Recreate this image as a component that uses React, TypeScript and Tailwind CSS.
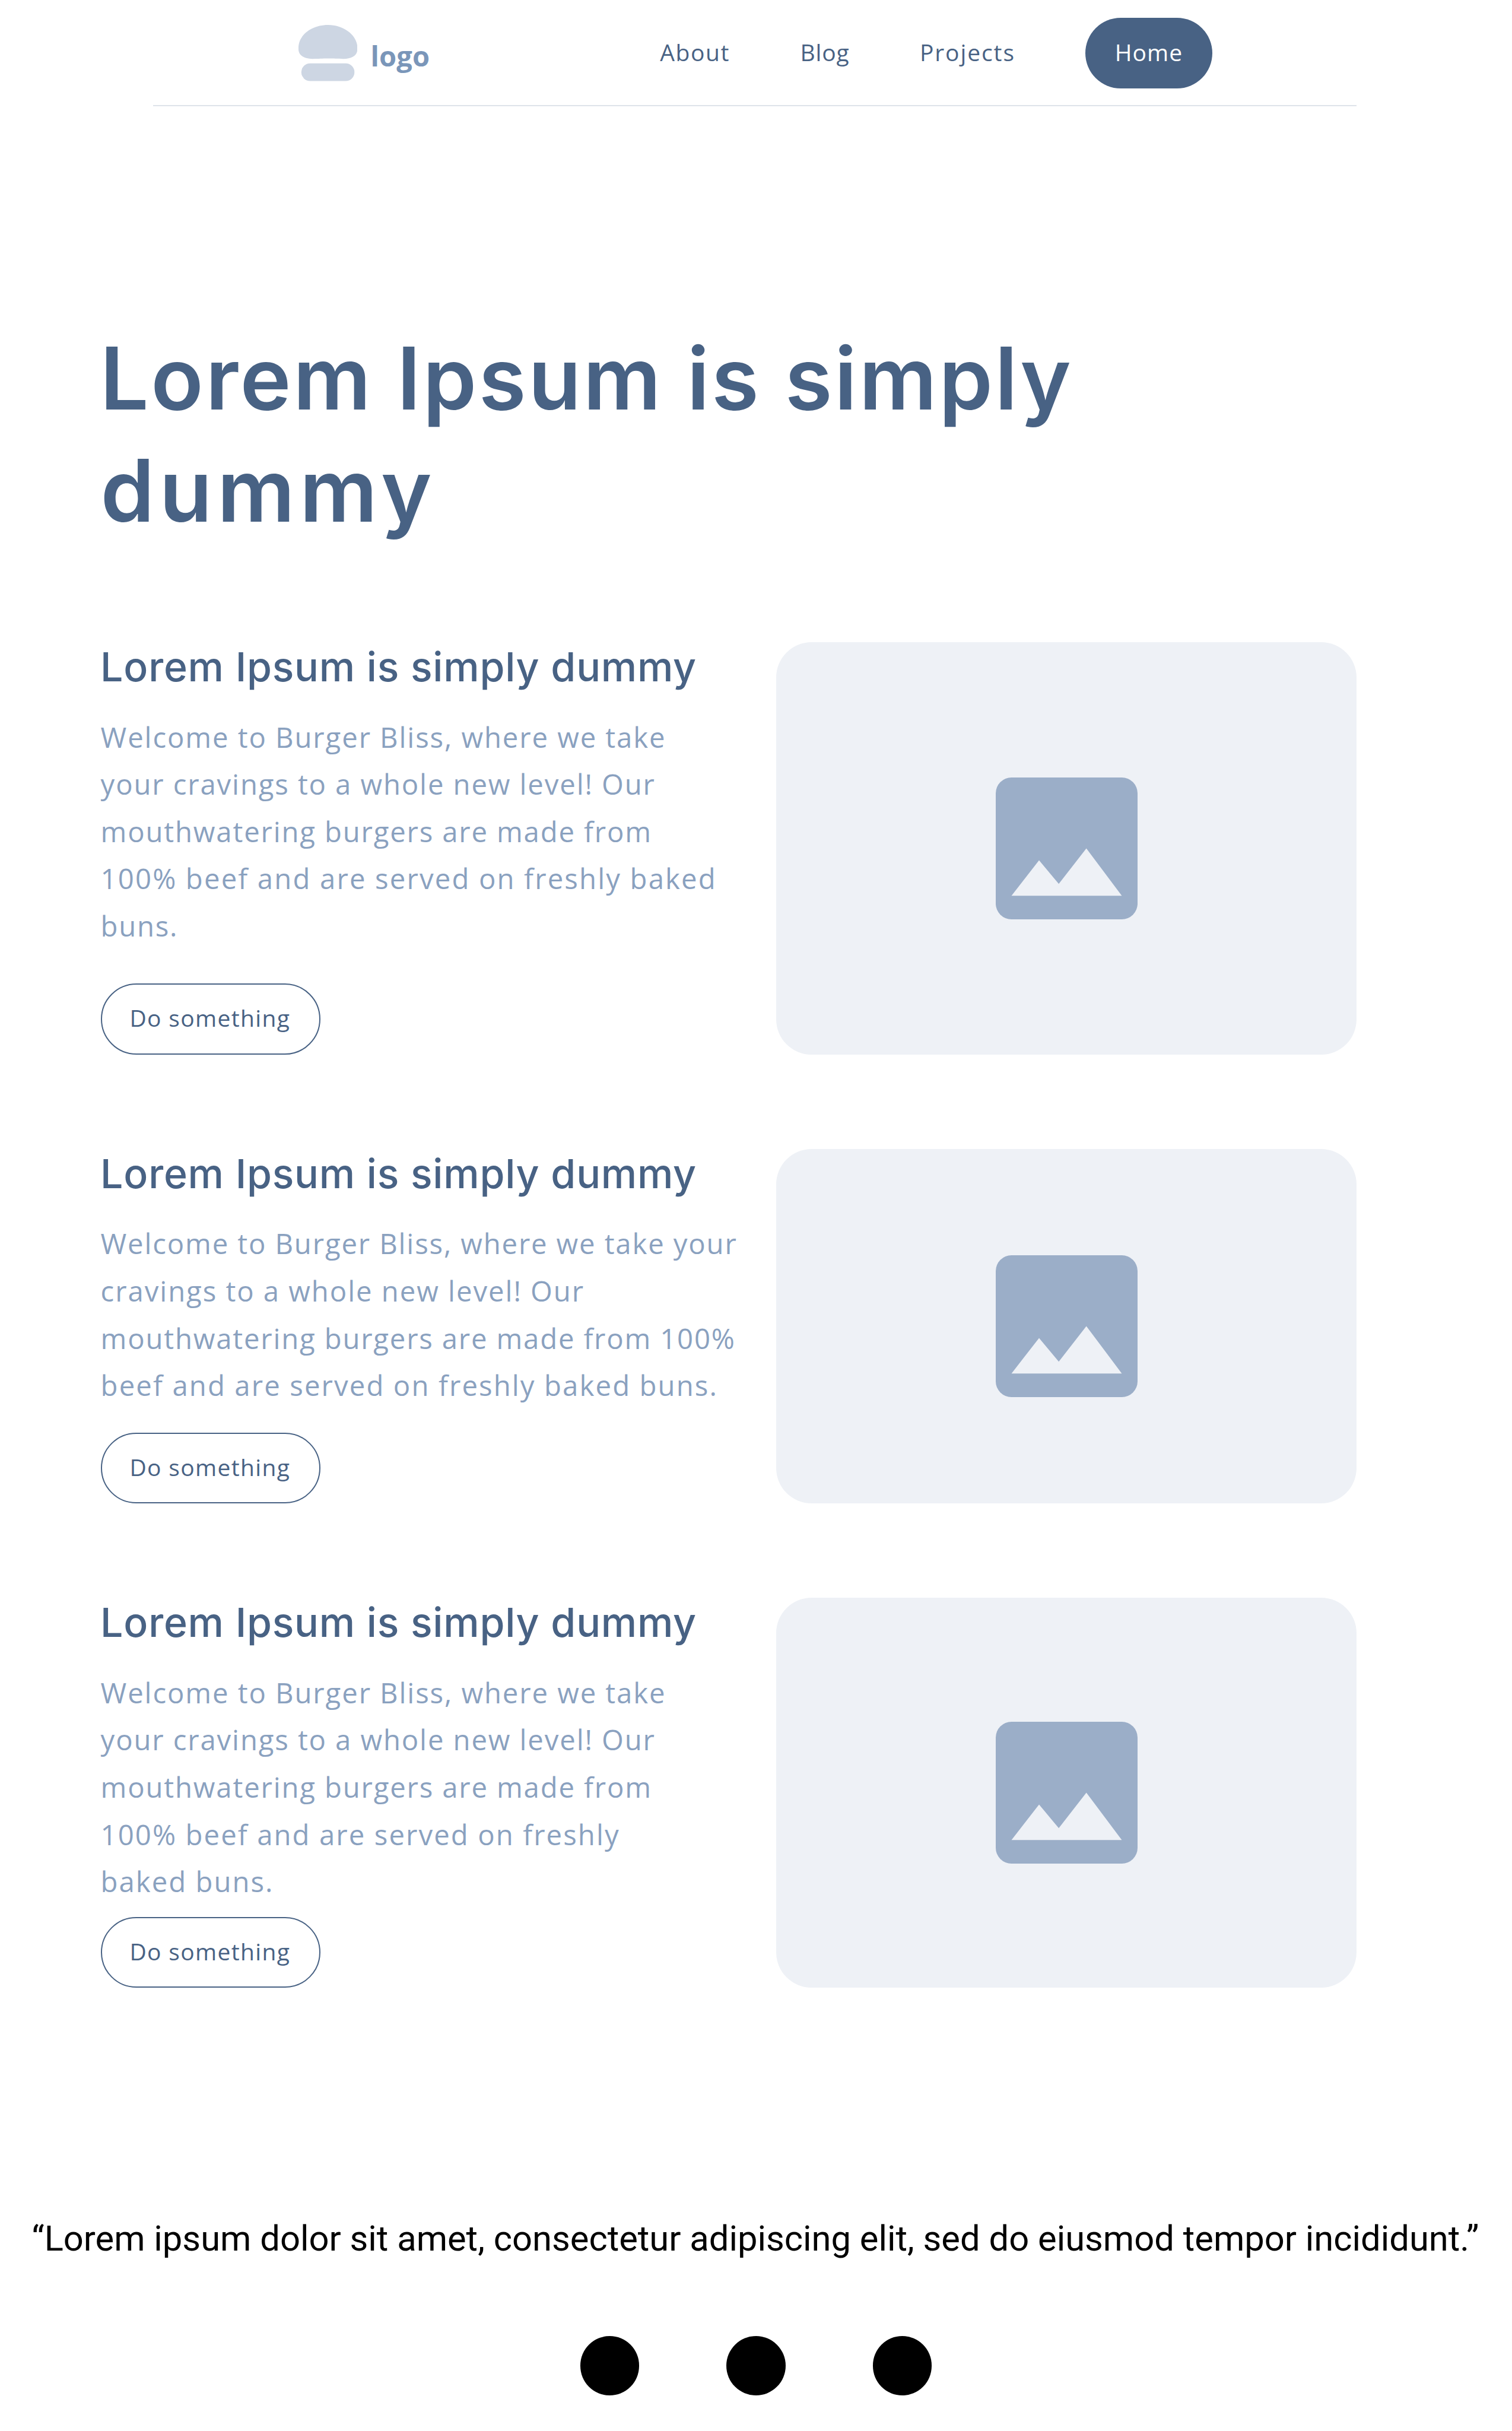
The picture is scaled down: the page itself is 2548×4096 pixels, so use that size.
type Line = { text: string; tracking: string };

const W = "Welcome to Burger Bliss, where we take";

const sections: { height: string; lines: Line[] }[] = [
  {
    height: "h-[694.7px]",
    lines: [
      { text: W, tracking: "tracking-[1.9px]" },
      { text: "your cravings to a whole new level! Our", tracking: "tracking-[1.87px]" },
      { text: "mouthwatering burgers are made from", tracking: "tracking-[1.83px]" },
      { text: "100% beef and are served on freshly baked", tracking: "tracking-[2.15px]" },
      { text: "buns.", tracking: "tracking-[1.7px]" },
    ],
  },
  {
    height: "h-[597.2px]",
    lines: [
      { text: W + " your", tracking: "tracking-[1.85px]" },
      { text: "cravings to a whole new level! Our", tracking: "tracking-[1.94px]" },
      { text: "mouthwatering burgers are made from 100%", tracking: "tracking-[1.81px]" },
      { text: "beef and are served on freshly baked buns.", tracking: "tracking-[2.11px]" },
    ],
  },
  {
    height: "h-[656.8px]",
    lines: [
      { text: W, tracking: "tracking-[1.9px]" },
      { text: "your cravings to a whole new level! Our", tracking: "tracking-[1.87px]" },
      { text: "mouthwatering burgers are made from", tracking: "tracking-[1.83px]" },
      { text: "100% beef and are served on freshly", tracking: "tracking-[2.08px]" },
      { text: "baked buns.", tracking: "tracking-[2px]" },
    ],
  },
];

function BurgerLogo() {
  return (
    <svg className="mt-[12.3px] h-[94.6px] w-[99.3px]" viewBox="0 0 499 475" fill="#cdd6e3">
      <path d="M0 193C0 86 112 0 250 0C387 0 499 90 499 193V205C499 258 452 287 380 287C330 287 300 284 250 284C200 284 170 287 120 287C48 287 0 258 0 205Z" />
      <rect x="24" y="325" width="450" height="150" rx="75" />
    </svg>
  );
}

function ImageIcon() {
  return (
    <svg className="h-[239px] w-[239px]" viewBox="0 0 18 18">
      <rect width="18" height="18" rx="2" fill="#9baec8" />
      <path d="M2 15L5.5 10.5L8 13.5L11.5 9L16 15Z" fill="#eef1f6" />
    </svg>
  );
}

function Header() {
  return (
    <header className="ml-[258.3px] flex h-[179.2px] w-[2028.2px] items-start justify-between border-b-[2.4px] border-[#dee3ea] pt-[29.9px] pr-[243.4px] pl-[244.5px]">
      <div className="flex items-start gap-[22.4px]">
        <BurgerLogo />
        <span className="mt-[34.6px] text-[47px] leading-[60px] font-bold tracking-[0.2px] text-[#7a96b9]">logo</span>
      </div>
      <nav className="flex items-center gap-[118.4px] text-[39px] leading-[116.4px] text-[#486284]">
        <a className="pb-[3px] tracking-[1.6px]">About</a>
        <a className="pb-[3px] tracking-[0.85px]">Blog</a>
        <a className="pb-[3px] tracking-[1.9px]">Projects</a>
        <a className="w-[213.8px] rounded-full bg-[#486284] pb-[3px] pl-[49.4px] tracking-[1.06px] text-white">Home</a>
      </nav>
    </header>
  );
}

export default function App() {
  return (
    <div className="flex h-[4096px] w-[2548px] flex-col overflow-hidden bg-white font-['Open_Sans',sans-serif] whitespace-nowrap">
      <Header />
      <main className="mt-[363.5px] ml-[169.6px] w-[2116.9px]">
        <h1 className="font-['Inter',sans-serif] text-[145.5px] leading-[189.3px] font-semibold text-[#486284]">
          <span className="-ml-[1px] block tracking-[3.5px]">Lorem Ipsum is simply</span>
          <span className="block tracking-[8.2px]">dummy</span>
        </h1>
        <div className="mt-[160.7px] flex flex-col gap-[159.2px]">
          {sections.map((s, i) => (
            <section key={i} className={"flex justify-between " + s.height}>
              <div className="flex flex-col items-start">
                <h2 className="mb-[37.4px] -ml-[0.5px] font-['Inter',sans-serif] text-[68px] leading-[82.2px] font-medium tracking-[0.76px] text-[#486284]">
                  Lorem Ipsum is simply dummy
                </h2>
                <p className="text-[47.3px] leading-[79.6px] text-[#8aa1bf]">
                  {s.lines.map((l) => (
                    <span key={l.text} className={"block " + l.tracking}>
                      {l.text}
                    </span>
                  ))}
                </p>
                <button className="mt-auto h-[119.4px] w-[370.4px] rounded-full border-2 border-[#486284] pb-[3px] pl-[46.8px] text-left text-[39px] leading-[112.4px] tracking-[1.35px] text-[#486284]">
                  Do something
                </button>
              </div>
              <div className="flex w-[978.6px] items-center justify-center rounded-[59.7px] bg-[#eef1f6]">
                <ImageIcon />
              </div>
            </section>
          ))}
        </div>
      </main>
      <footer className="mt-[387.5px] flex flex-col items-center">
        <p className="-ml-[2px] font-['Roboto',sans-serif] text-[59.7px] leading-[70px] text-black">
          “Lorem ipsum dolor sit amet, consectetur adipiscing elit, sed do eiusmod tempor incididunt.”
        </p>
        <div className="mt-[129.9px] flex gap-[146.8px]">
          <span className="size-[99.6px] rounded-full bg-black" />
          <span className="size-[99.6px] rounded-full bg-black" />
          <span className="size-[99.6px] rounded-full bg-black" />
        </div>
      </footer>
    </div>
  );
}
